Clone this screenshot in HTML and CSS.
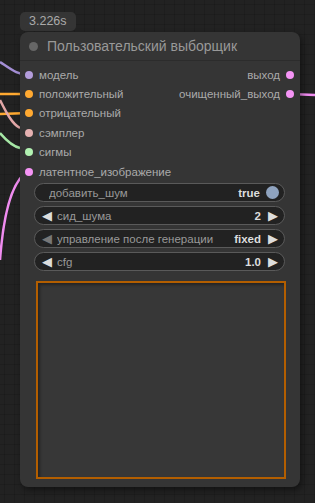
FILE: index.html
```html
<!DOCTYPE html>
<html>
<head>
	<title>Пользовательский выборщик</title>
	<link rel="stylesheet" href="styles.css">
</head>
<body>
	<div class="canvas">
		<!-- links between nodes -->
		<svg class="wires" width="315" height="503" viewBox="0 0 315 503">
			<path d="M0 62 C12 70 18 75 29 75" stroke="#a48fd6" />
			<path d="M0 94 L29 94" stroke="#ffa931" />
			<path d="M0 114 L29 113" stroke="#ffa931" />
			<path d="M0 100 C6 112 12 124 20 128" stroke="#e3a7a7" />
			<path d="M0 133 C6 140 12 146 20 148" stroke="#a6e8a6" />
			<path d="M0 260 C3 220 10 180 29 171" stroke="#f08cf0" />
			<path d="M290 94 L315 95" stroke="#f08cf0" />
		</svg>

		<div class="badge">3.226s</div>

		<div class="node">
			<div class="node-title">
				<span class="title-dot"></span>
				<span>Пользовательский выборщик</span>
			</div>

			<div class="slots">
				<div class="inputs">
					<div class="slot"><span class="dot purple"></span>модель</div>
					<div class="slot"><span class="dot orange"></span>положительный</div>
					<div class="slot"><span class="dot orange"></span>отрицательный</div>
					<div class="slot"><span class="dot rose"></span>сэмплер</div>
					<div class="slot"><span class="dot green"></span>сигмы</div>
					<div class="slot"><span class="dot pink"></span>латентное_изображение</div>
				</div>
				<div class="outputs">
					<div class="slot">выход<span class="dot pink"></span></div>
					<div class="slot">очищенный_выход<span class="dot pink"></span></div>
				</div>
			</div>

			<div class="widgets">
				<div class="widget">
					<span class="label plain">добавить_шум</span>
					<span class="value">true</span>
					<span class="toggle"></span>
				</div>
				<div class="widget">
					<span class="arrow">&#9664;</span>
					<span class="label">сид_шума</span>
					<span class="value">2</span>
					<span class="arrow">&#9654;</span>
				</div>
				<div class="widget">
					<span class="arrow dim">&#9664;</span>
					<span class="label">управление после генерации</span>
					<span class="value">fixed</span>
					<span class="arrow">&#9654;</span>
				</div>
				<div class="widget">
					<span class="arrow">&#9664;</span>
					<span class="label">cfg</span>
					<span class="value">1.0</span>
					<span class="arrow">&#9654;</span>
				</div>
			</div>

			<div class="preview"></div>
		</div>
	</div>
</body>
</html>
```

FILE: styles.css
```css
body {
	margin: 0;
	background: #222;
	font-family: "Liberation Sans", Arial, sans-serif;
	overflow: hidden;
}
.canvas {
	position: relative;
	width: 315px;
	height: 503px;
	box-sizing: border-box;
	padding: 12px 15px 0 20px;
	background-color: #222;
	background-image:
		linear-gradient(to right, rgba(0,0,0,0.12) 1px, transparent 1px),
		linear-gradient(to bottom, rgba(0,0,0,0.12) 1px, transparent 1px);
	background-size: 10px 10px;
	background-position: 4px 4px;
}
.wires {
	position: absolute;
	left: 0;
	top: 0;
	z-index: 0;
}
.wires path {
	fill: none;
	stroke-width: 2.5;
}
.badge {
	position: relative;
	z-index: 1;
	width: fit-content;
	height: 19px;
	line-height: 19px;
	margin-bottom: 1px;
	padding: 0 9px 0 9px;
	background: #353535;
	border-radius: 5px;
	color: #aaa;
	font-size: 12.5px;
}
.node {
	position: relative;
	z-index: 1;
	width: 280px;
	height: 455px;
	background: #353535;
	border-radius: 8px;
	box-shadow: 2px 3px 6px rgba(0,0,0,0.45);
	display: flex;
	flex-direction: column;
}
.node-title {
	height: 28px;
	display: flex;
	align-items: center;
	gap: 9px;
	padding-left: 9px;
	color: #999;
	font-size: 14px;
	border-bottom: 1px solid #2c2c2c;
}
.title-dot {
	width: 9px;
	height: 9px;
	border-radius: 50%;
	background: #666;
}
.slots {
	display: flex;
	justify-content: space-between;
	padding-top: 4px;
}
.outputs {
	display: flex;
	flex-direction: column;
	align-items: flex-end;
}
.slot {
	height: 19.4px;
	display: flex;
	align-items: center;
	font-size: 11.5px;
	color: #aaa;
}
.inputs .slot .dot {
	margin: 0 6px 0 5px;
}
.outputs .slot .dot {
	margin: 0 6px 0 6px;
}
.dot {
	width: 8px;
	height: 8px;
	border-radius: 50%;
	display: inline-block;
}
.purple { background: #b39ddb; }
.orange { background: #ffa931; }
.rose { background: #e6b1b1; }
.green { background: #b2f2b2; }
.pink { background: #f594f5; }
.widgets {
	display: flex;
	flex-direction: column;
	gap: 4px;
	padding: 2px 15px 0 14px;
}
.widget {
	height: 19px;
	box-sizing: border-box;
	border: 1px solid #5a5a5a;
	border-radius: 10px;
	background: #222;
	display: flex;
	align-items: center;
	padding: 0 5px 0 6px;
	font-size: 11.5px;
}
.arrow {
	color: #ddd;
	font-size: 13px;
	width: 12px;
	text-align: center;
}
.arrow.dim {
	color: #777;
}
.label {
	color: #999;
	flex: 1;
	margin-left: 4px;
	white-space: nowrap;
	overflow: hidden;
}
.label.plain {
	margin-left: 8px;
}
.value {
	color: #ddd;
	font-weight: 600;
	margin-right: 6px;
}
.toggle {
	width: 13px;
	height: 13px;
	border-radius: 50%;
	background: #8fa3bf;
}
.preview {
	margin: 10px 14px 0 16px;
	height: 198px;
	box-sizing: border-box;
	border: 2px solid #b35e00;
	background: #373737;
	box-shadow: inset 2px 2px 3px rgba(0,0,0,0.35);
}
```
